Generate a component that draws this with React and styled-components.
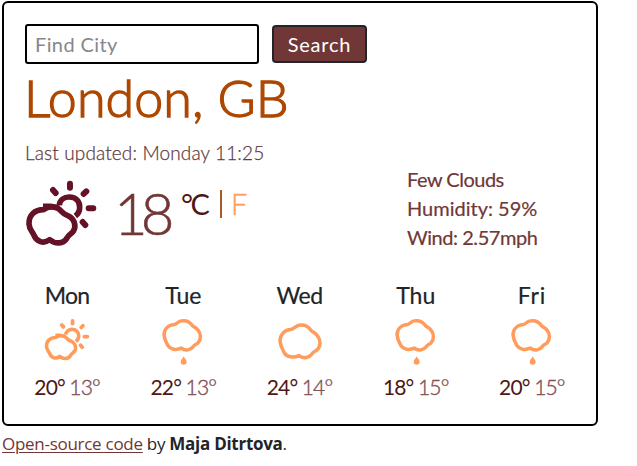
import React from "react";
import styled, { createGlobalStyle } from "styled-components";

const GlobalStyle = createGlobalStyle`
  * { box-sizing: border-box; }
  body { margin: 0; background: #fff; overflow: hidden; }
`;

const Page = styled.main`
  width: 637px;
  height: 466px;
  padding: 1px 0 0 2px;
  color: #212529;
  font-family: Lato, "Liberation Sans", sans-serif;
  white-space: nowrap;
`;

const Card = styled.section`
  width: 596px;
  height: 425px;
  padding: 21px 6px 0 21px;
  border: 2px solid #000;
  border-radius: 6px;
`;

const SearchForm = styled.form`
  display: flex;
  align-items: center;
  gap: 13px;
  height: 40px;
`;

const CityInput = styled.input`
  width: 234px;
  height: 40px;
  padding: 0 8px;
  border: 2px solid #000;
  border-radius: 3px;
  font: 400 20px Lato, sans-serif;
  letter-spacing: 0.4px;
  &::placeholder { color: #85888b; opacity: 1; }
`;

const SearchButton = styled.button`
  width: 95px;
  height: 38px;
  padding: 0;
  border: 2px solid #212529;
  border-radius: 4px;
  background: #703736;
  color: #fff;
  font: 400 20px Lato, sans-serif;
  letter-spacing: 0.8px;
`;

const City = styled.h1`
  margin: 2px 0 0;
  height: 62px;
  color: #ad4700;
  font-size: 52px;
  font-weight: 300;
  line-height: 62px;
  letter-spacing: 0.05px;
  text-indent: -1px;
  -webkit-text-stroke: 1.3px currentColor;
`;

const Updated = styled.div`
  margin-top: 13px;
  height: 24px;
  color: #5f3b3e;
  font-size: 19px;
  font-weight: 300;
  line-height: 24px;
  letter-spacing: 0.13px;
  -webkit-text-stroke: 0.25px currentColor;
`;

const Current = styled.div`
  display: grid;
  grid-template-columns: 90px 66px 226px 1fr;
  height: 87px;
`;

const CurrentIcon = styled.div`
  padding-top: 13.5px;
  color: #641326;
`;

const Degrees = styled.div`
  padding-top: 13px;
  color: #703736;
  font-size: 58px;
  font-weight: 300;
  line-height: 70px;
  letter-spacing: -7px;
  text-indent: -1px;
  -webkit-text-stroke: 0.6px currentColor;
`;

const Units = styled.div`
  display: flex;
  height: 36px;
  margin-top: 21px;
  align-items: center;
  font-size: 29px;
  line-height: 36px;
`;

const Celsius = styled.span`
  width: 39px;
  color: #4e1717;
  letter-spacing: -2.4px;
`;

const Divider = styled.span`
  width: 2px;
  height: 28px;
  margin-right: 9px;
  background: #a65c28;
`;

const Fahrenheit = styled.span`
  color: #ff9c5b;
  font-weight: 300;
  -webkit-text-stroke: 0.4px currentColor;
`;

const Details = styled.div`
  color: #703736;
  font-size: 20px;
  font-weight: 400;
  line-height: 29px;
  -webkit-text-stroke: 0.2px currentColor;
`;

const Detail = styled.div`
  letter-spacing: ${({ $tracking }) => $tracking}px;
`;

const Forecast = styled.div`
  display: grid;
  grid-template-columns: repeat(5, 1fr);
  width: 581px;
  margin: 27px 0 0 -16px;
`;

const ForecastDay = styled.div`
  display: flex;
  flex-direction: column;
  align-items: center;
`;

const DayName = styled.div`
  height: 32px;
  font-size: 23px;
  line-height: 32px;
  letter-spacing: ${({ $tracking }) => $tracking}px;
  -webkit-text-stroke: 0.2px currentColor;
`;

const ForecastIcon = styled.div`
  height: 62px;
  padding-top: 7px;
  color: #ff9c5b;
`;

const Temps = styled.div`
  height: 28px;
  font-size: 21px;
  line-height: 28px;
  letter-spacing: -0.85px;
`;

const High = styled.span`
  color: #4e1717;
`;

const Low = styled.span`
  color: #825151;
  font-weight: 300;
  -webkit-text-stroke: 0.4px currentColor;
`;

const Footer = styled.footer`
  margin-top: 5px;
  font-family: "Open Sans", "Noto Sans", sans-serif;
  font-size: 17px;
  line-height: 26px;
  letter-spacing: -0.28px;
`;

const SourceLink = styled.a`
  color: #703736;
  text-decoration: underline;
  text-underline-offset: 2px;
  text-decoration-thickness: 1px;
`;

const Author = styled.strong`
  font-weight: 700;
`;

const CloudSvg = styled.svg`
  display: block;
  overflow: visible;
`;

const cloudPath =
  "M9 50C9 32 21 17 43 15C51 14 54 5 66 3C83 0 94 7 101 17C105 23 114 24 121 34C131 46 132 64 121 76C116 82 110 80 104 90C98 99 80 105 66 94C48 102 30 98 22 86C18 76 11 69 9 50Z";

function PartlyCloudy({ width }) {
  return (
    <CloudSvg width={width} height={(width * 205) / 220} viewBox="45 40 220 205" fill="none" stroke="currentColor" strokeWidth="17" strokeLinejoin="round">
      <path d="M99 122H121C125 123 137 122 145 128" />
      <path d="M148 119C149 103 162 94 178 94C199 94 210 108 209 126C209 137 204 145 196 151" />
      <path d="M101 132C74 132 56 148 57 175C58 194 68 197 72 209C79 228 101 236 119 222C136 236 160 236 171 217C175 207 184 205 190 197C200 181 193 161 178 152C168 148 162 146 155 138C143 122 116 119 101 132Z" />
      <path strokeLinecap="round" strokeWidth="18" d="M180 54V66M129 73L137 82M229 77L221 85M236 128H250M218 169L226 178" />
    </CloudSvg>
  );
}

function Cloudy() {
  return (
    <CloudSvg width="45" height="36" viewBox="0 -4 135 108" fill="none">
      <path d={cloudPath} stroke="currentColor" strokeWidth="10.5" />
    </CloudSvg>
  );
}

function Rainy() {
  return (
    <CloudSvg width="41" height="46" viewBox="0 0 123 138" fill="none">
      <path d={cloudPath} transform="translate(-2 3) scale(.91 .9)" stroke="currentColor" strokeWidth="11.5" />
      <path d="M65 112C63 119 56 122 56 129C56 140 74 140 74 129C74 122 67 119 65 112Z" fill="currentColor" />
    </CloudSvg>
  );
}

const CloudOffset = styled.div`
  padding: 5px 0 0 1px;
`;

const SunOffset = styled.div`
  padding-left: 1px;
`;

const RainOffset = styled.div`
  padding: 0.5px 1px 0 0;
`;

function Condition({ type }) {
  if (type === "sun") return <SunOffset><PartlyCloudy width={46.5} /></SunOffset>;
  if (type === "cloud") return <CloudOffset><Cloudy /></CloudOffset>;
  return <RainOffset><Rainy /></RainOffset>;
}

const days = [
  { name: "Mon", icon: "sun", high: 20, low: 13, tracking: -0.8 },
  { name: "Tue", icon: "rain", high: 22, low: 13, tracking: 0 },
  { name: "Wed", icon: "cloud", high: 24, low: 14, tracking: -0.5 },
  { name: "Thu", icon: "rain", high: 18, low: 15, tracking: 0 },
  { name: "Fri", icon: "rain", high: 20, low: 15, tracking: 0.8 },
];

export default function App() {
  return (
    <>
      <GlobalStyle />
      <Page>
        <Card>
          <SearchForm onSubmit={(event) => event.preventDefault()}>
            <CityInput placeholder="Find City" aria-label="Find City" />
            <SearchButton type="submit">Search</SearchButton>
          </SearchForm>
          <City>London, GB</City>
          <Updated>Last updated: Monday 11:25</Updated>
          <Current>
            <CurrentIcon><PartlyCloudy width={73.3} /></CurrentIcon>
            <Degrees>18</Degrees>
            <Units>
              <Celsius>°C</Celsius>
              <Divider />
              <Fahrenheit>F</Fahrenheit>
            </Units>
            <Details>
              <Detail $tracking={-0.5}>Few Clouds</Detail>
              <Detail $tracking={0}>Humidity: 59%</Detail>
              <Detail $tracking={-0.45}>Wind: 2.57mph</Detail>
            </Details>
          </Current>
          <Forecast>
            {days.map((day) => (
              <ForecastDay key={day.name}>
                <DayName $tracking={day.tracking}>{day.name}</DayName>
                <ForecastIcon><Condition type={day.icon} /></ForecastIcon>
                <Temps><High>{day.high}°</High> <Low>{day.low}°</Low></Temps>
              </ForecastDay>
            ))}
          </Forecast>
        </Card>
        <Footer>
          <SourceLink href="#">Open-source code</SourceLink> by <Author>Maja Ditrtova</Author>.
        </Footer>
      </Page>
    </>
  );
}
